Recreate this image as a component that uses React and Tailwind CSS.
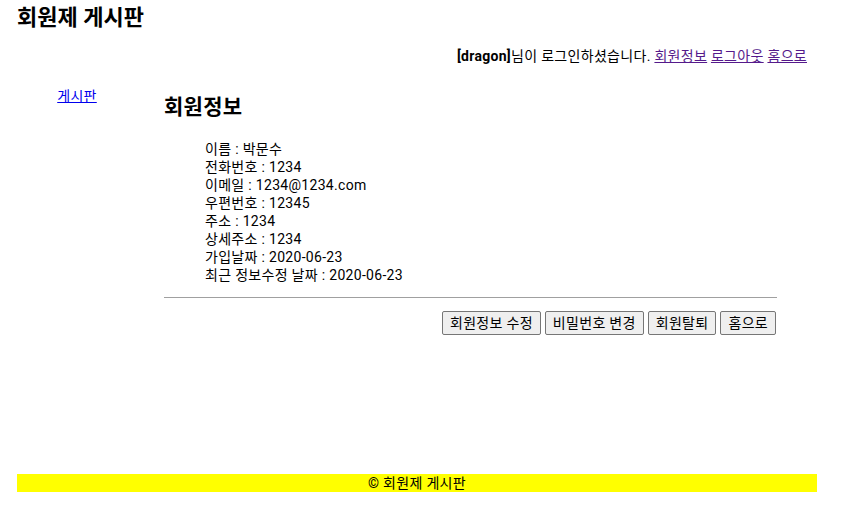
import React from "react";

const info = [
  ["이름", "박문수"],
  ["전화번호", "1234"],
  ["이메일", "1234@1234.com"],
  ["우편번호", "12345"],
  ["주소", "1234"],
  ["상세주소", "1234"],
  ["가입날짜", "2020-06-23"],
  ["최근 정보수정 날짜", "2020-06-23"],
];

const buttons = ["회원정보 수정", "비밀번호 변경", "회원탈퇴", "홈으로"];

const App = () => {
  return (
    <div
      className="w-[800px] ml-[17px] text-[14px] tracking-[0.3px] text-black bg-white"
      style={{ fontFamily: 'Roboto, "Noto Sans CJK KR", sans-serif' }}
    >
      {/* header */}
      <h1 className="text-[22px] font-bold leading-[26px] pt-[5px] tracking-[0px]">회원제 게시판</h1>

      {/* login status */}
      <div className="flex justify-end pr-[10px] mt-[16px] leading-[18px]">
        <span>
          <b>[dragon]</b>님이 로그인하셨습니다.{" "}
          <a href="#" className="underline text-[#551a8b]">회원정보</a>{" "}
          <a href="#" className="underline text-[#551a8b]">로그아웃</a>{" "}
          <a href="#" className="underline text-[#551a8b]">홈으로</a>
        </span>
      </div>

      {/* body */}
      <div className="flex mt-[22px]">
        <nav className="w-[147px] flex justify-center pr-[27px]">
          <a href="#" className="underline text-[#0000ee] leading-[18px] h-[18px]">게시판</a>
        </nav>

        <main className="w-[613px] pt-[8px]">
          <h2 className="text-[21px] font-bold leading-[24px] tracking-[0.3px]">회원정보</h2>

          <ul className="mt-[21px] pl-[41px] leading-[18px]">
            {info.map(([label, value]) => (
              <li key={label} className="h-[18px]">
                {label} : {value}
              </li>
            ))}
          </ul>

          <hr className="mt-[13px] border-t border-[#a0a0a0]" />

          <div className="flex justify-end gap-[4px] mt-[13px] pr-[1px]">
            {buttons.map((b) => (
              <button
                key={b}
                className="h-[24px] px-[7px] bg-[#efefef] border border-[#767676] rounded-[2px] text-[14px] leading-[18px]"
              >
                {b}
              </button>
            ))}
          </div>
        </main>
      </div>

      {/* footer */}
      <footer className="mt-[139px] bg-[#ffff00] h-[18px] leading-[18px] text-center">
        © 회원제 게시판
      </footer>
    </div>
  );
};

export default App;
